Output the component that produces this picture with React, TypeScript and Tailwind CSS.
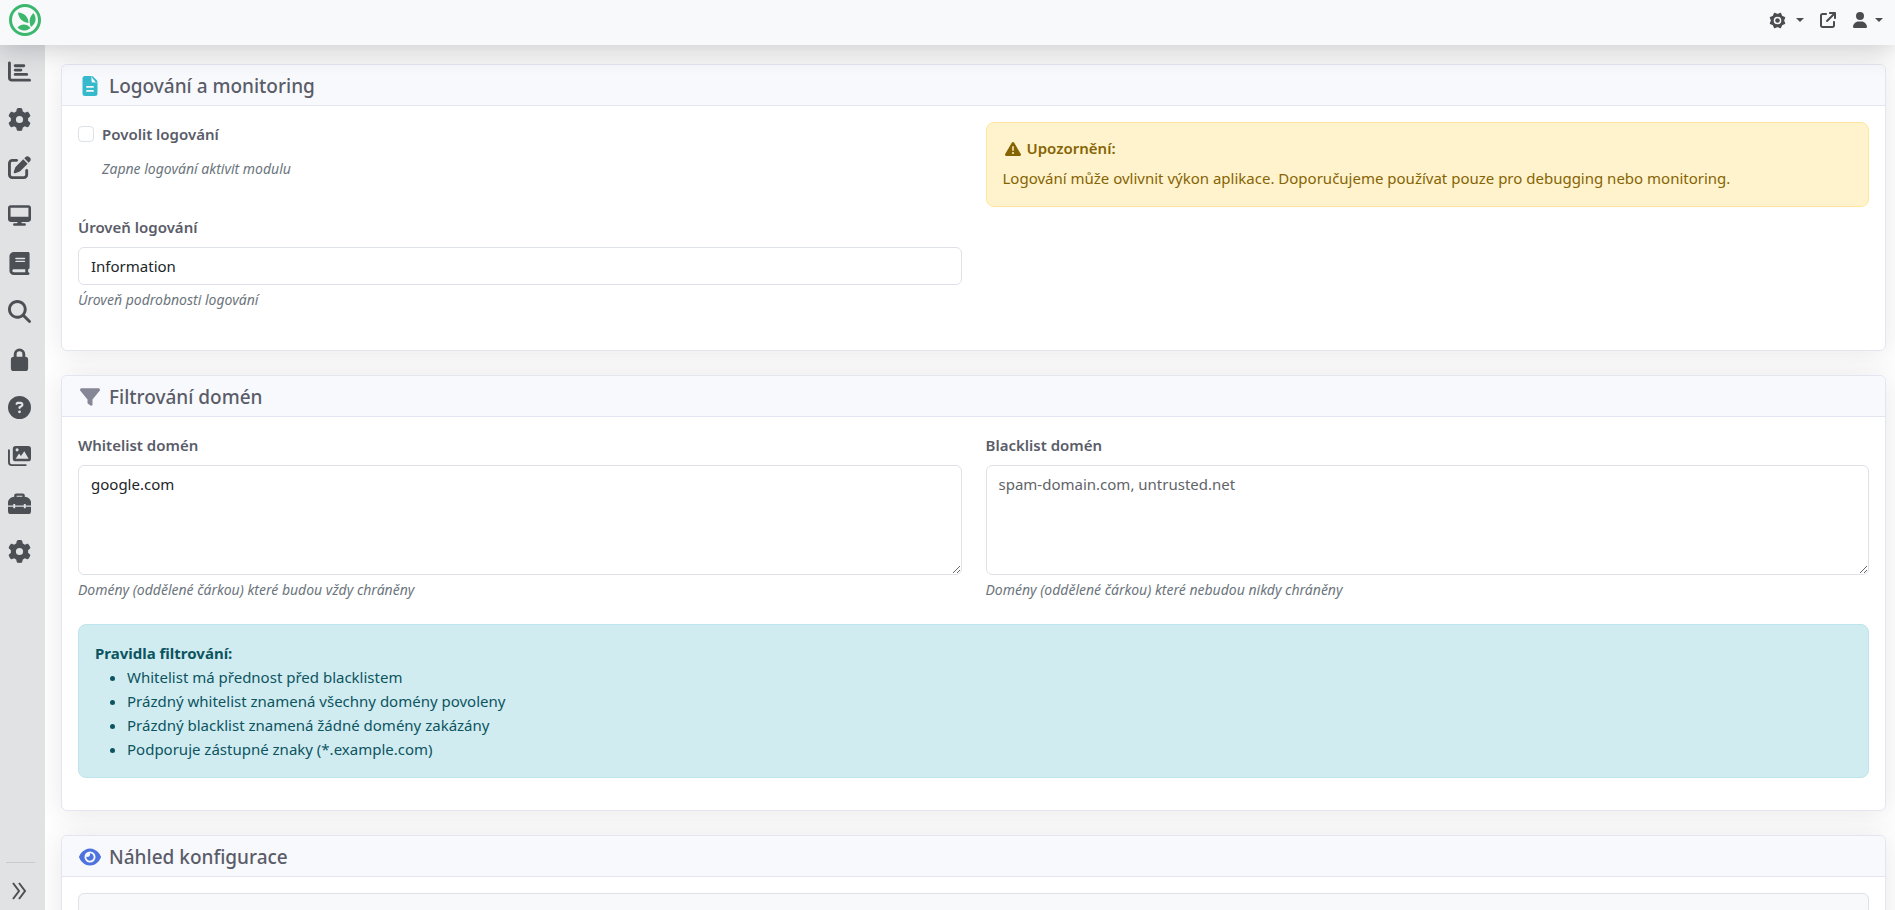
import React, { useState } from 'react';
import {
  FaArrowUpRightFromSquare,
  FaBook,
  FaChartBar,
  FaCircleQuestion,
  FaDesktop,
  FaEye,
  FaFilter,
  FaGear,
  FaMagnifyingGlass,
  FaPenToSquare,
  FaTriangleExclamation,
  FaUser,
} from 'react-icons/fa6';

type IconProps = { className?: string };

function SunIcon({ className }: IconProps) {
  return (
    <svg viewBox="0 0 24 24" className={className} fill="currentColor" aria-hidden="true">
      <path
        fillRule="evenodd"
        stroke="currentColor"
        strokeWidth="1.500"
        strokeLinejoin="round"
        d="M16.200 1.800 18 6l4.200 1.800L20.500 12l1.700 4.200L18 18l-1.800 4.200L12 20.500l-4.200 1.700L6 18l-4.200-1.800L3.500 12 1.800 7.800 6 6l1.800-4.200L12 3.500ZM12 5.800a6.200 6.200 0 1 0 0 12.400 6.200 6.200 0 0 0 0-12.400Z"
      />
      <circle cx="12" cy="12" r="3.200" />
    </svg>
  );
}

function LockIcon({ className }: IconProps) {
  return (
    <svg viewBox="0 0 24 24" className={className} fill="currentColor" aria-hidden="true">
      <path d="M6 9V6.500a6 6 0 0 1 12 0V9a3 3 0 0 1 3 3v9a3 3 0 0 1-3 3H6a3 3 0 0 1-3-3v-9a3 3 0 0 1 3-3Zm3 0h6V6.500a3 3 0 0 0-6 0Z" />
    </svg>
  );
}

function ImagesIcon({ className }: IconProps) {
  return (
    <svg viewBox="0 0 24 24" className={className} fill="currentColor" aria-hidden="true">
      <path
        fillRule="evenodd"
        d="M8 2h13a3 3 0 0 1 3 3v10a3 3 0 0 1-3 3H8a3 3 0 0 1-3-3V5a3 3 0 0 1 3-3Zm1.500 2.500a1.600 1.600 0 1 0 0 3.200 1.600 1.600 0 0 0 0-3.200ZM8 15.500h13.500L17 7.500l-3.500 5-2-2.500Z"
      />
      <path d="M1 6.500V19a3 3 0 0 0 3 3h14.500" fill="none" stroke="currentColor" strokeWidth="2" strokeLinecap="round" />
    </svg>
  );
}

function ToolboxIcon({ className }: IconProps) {
  return (
    <svg viewBox="0 0 24 24" className={className} fill="currentColor" aria-hidden="true">
      <path d="M6.500 5V3.500a2 2 0 0 1 2-2h7a2 2 0 0 1 2 2V5A6.500 6.500 0 0 1 24 11.500V14h-5.500v-1.500h-2V14h-9v-1.500h-2V14H0v-2.500A6.500 6.500 0 0 1 6.500 5ZM9 5h6V3.800H9Z" />
      <path d="M0 15.500h5.500V17h2v-1.500h9V17h2v-1.500H24V20a3 3 0 0 1-3 3H3a3 3 0 0 1-3-3Z" />
    </svg>
  );
}

function FileIcon({ className }: IconProps) {
  return (
    <svg viewBox="0 0 20 20" className={className} fill="currentColor" aria-hidden="true">
      <path
        fillRule="evenodd"
        d="M5 0h6.500v5A1.500 1.500 0 0 0 13 6.500h4.500V17.500A2.500 2.500 0 0 1 15 20H5a2.500 2.500 0 0 1-2.500-2.500v-15A2.500 2.500 0 0 1 5 0ZM7 10a.9.9 0 0 0 0 1.800h6A.9.9 0 0 0 13 10ZM7 14a.9.9 0 0 0 0 1.800h6A.9.9 0 0 0 13 14Z"
      />
      <path d="M12.200.3c.5.200.8.400 1.200.8l3.200 3.300c.3.300.5.600.7 1.100h-4.300a.8.8 0 0 1-.8-.8Z" fill="#fff" />
      <path d="M11.500 0c.8 0 1.300.2 1.800.7l3.500 3.600c.5.500.7 1.100.7 1.800v.4h-1.600l-3.600-4.400Z" />
    </svg>
  );
}

const navItems: { label: string; icon: React.ComponentType<IconProps> }[] = [
  { label: 'Přehled', icon: FaChartBar },
  { label: 'Nastavení', icon: FaGear },
  { label: 'Obsah', icon: FaPenToSquare },
  { label: 'Vzhled', icon: FaDesktop },
  { label: 'Katalog', icon: FaBook },
  { label: 'Hledat', icon: FaMagnifyingGlass },
  { label: 'Zabezpečení', icon: LockIcon },
  { label: 'Nápověda', icon: FaCircleQuestion },
  { label: 'Média', icon: ImagesIcon },
  { label: 'Nástroje', icon: ToolboxIcon },
  { label: 'Systém', icon: FaGear },
];

const rules = [
  'Whitelist má přednost před blacklistem',
  'Prázdný whitelist znamená všechny domény povoleny',
  'Prázdný blacklist znamená žádné domény zakázány',
  'Podporuje zástupné znaky (*.example.com)',
];

const labelClass = 'block leading-6 font-semibold text-[#5a5c69]';
const hintClass = 'text-[14px] leading-[21px] italic text-[#6c757d]';
const fieldClass = 'block w-full rounded-md border border-[#dee2e6] bg-white px-3 py-[6px] leading-6 text-[#212529] placeholder:text-[#5f6469]';

function Logo() {
  return (
    <svg viewBox="0 0 32 32" className="size-8" fill="#3cb76e">
      <circle cx="16" cy="16" r="14.5" fill="none" stroke="#3cb76e" strokeWidth="3" />
      <path d="M9 8.500C15 9 19.500 12.500 19.500 19C13 18 9.500 14 9 8.500Z" />
      <path d="M24.500 9C28 14 27 19.500 22 23C19.500 17.500 20.500 12.500 24.500 9Z" />
      <path d="M8.500 23.500C12 19.500 18 19.500 21.500 24C17.500 27.500 12 27.500 8.500 23.500Z" />
    </svg>
  );
}

function Caret() {
  return <span className="border-x-4 border-t-4 border-x-transparent border-t-[#4a4d50]" />;
}

// White panel with a tinted title bar
function Card({ icon, title, children }: { icon: React.ReactNode; title: string; children: React.ReactNode }) {
  return (
    <section className="rounded-md border border-[#e3e6f0] bg-white shadow-[0_2px_28px_0_rgba(58,59,69,0.12)]">
      <header className="flex h-[41px] items-center rounded-t-md border-b border-[#e3e6f0] bg-[#f8f9fc] px-4 pt-[2px]">
        <span className="mr-[7px] flex w-6 justify-center">{icon}</span>
        <h2 className="text-[19px] leading-6 font-medium text-[#5a5c69]">{title}</h2>
      </header>
      <div className="p-4">{children}</div>
    </section>
  );
}

export default function App() {
  const [enabled, setEnabled] = useState(false);
  const [level, setLevel] = useState('Information');
  const [whitelist, setWhitelist] = useState('google.com');
  const [blacklist, setBlacklist] = useState('');

  return (
    <div className="flex h-screen flex-col overflow-hidden bg-white font-['Noto_Sans','Open_Sans',sans-serif] text-[15px] leading-6 text-[#212529]">
      {/* ───── TOP BAR ───── */}
      <header className="relative z-10 flex h-[45px] shrink-0 items-center justify-between bg-[#f8f9fa] pr-3 pb-[5px] pl-[9px] shadow-[0_2px_28px_0_rgba(58,59,69,0.3)]">
        <a href="#" aria-label="Domů">
          <Logo />
        </a>
        <div className="flex items-center gap-4 text-[#4a4d50]">
          <button aria-label="Vzhled webu" className="flex items-center gap-[10px]">
            <SunIcon className="size-[17px]" />
            <Caret />
          </button>
          <a href="#" aria-label="Otevřít web">
            <FaArrowUpRightFromSquare className="size-4" />
          </a>
          <button aria-label="Uživatel" className="flex items-center gap-[7px]">
            <FaUser className="size-4" />
            <Caret />
          </button>
        </div>
      </header>

      <div className="flex min-h-0 flex-1">
        {/* ───── SIDEBAR ───── */}
        <aside className="flex w-[45px] shrink-0 flex-col justify-between bg-[#e1e2e4] text-[#4c5054]">
          <nav className="flex flex-col pt-[2px] pl-2">
            {navItems.map(({ label, icon: Icon }) => (
              <a key={label} href="#" aria-label={label} className="flex h-12 items-center">
                <Icon className="size-[23px]" />
              </a>
            ))}
          </nav>
          <button aria-label="Rozbalit menu" className="mr-[10px] ml-[6px] flex h-12 items-center border-t border-[#c8cacc] pt-2 pl-[5px]">
            <svg viewBox="0 0 16 18" className="h-[18px] w-4" fill="none" stroke="currentColor" strokeWidth="2">
              <path d="M2 1L8 9L2 17M8 1L14 9L8 17" />
            </svg>
          </button>
        </aside>

        {/* ───── CONTENT ───── */}
        <main className="flex min-w-0 flex-1 flex-col gap-6 overflow-hidden pt-[19px] pr-[9px] pl-4">
          <Card icon={<FileIcon className="size-5 text-[#36b9cc]" />} title="Logování a monitoring">
            <div className="grid grid-cols-2 items-start gap-6 pb-6">
              <div>
                <div className="flex items-center gap-2">
                  <input
                    id="enabled"
                    type="checkbox"
                    checked={enabled}
                    onChange={(e) => setEnabled(e.target.checked)}
                    className="size-4 appearance-none rounded border border-[#dee2e6] checked:bg-[#4e73df]"
                  />
                  <label htmlFor="enabled" className={labelClass}>Povolit logování</label>
                </div>
                <p className={`mt-3 ml-6 ${hintClass}`}>Zapne logování aktivit modulu</p>

                <label htmlFor="level" className={`mt-9 mb-2 ${labelClass}`}>Úroveň logování</label>
                <select
                  id="level"
                  value={level}
                  onChange={(e) => setLevel(e.target.value)}
                  className={`appearance-none ${fieldClass}`}
                >
                  <option>Information</option>
                  <option>Warning</option>
                  <option>Error</option>
                </select>
                <p className={`mt-1 ${hintClass}`}>Úroveň podrobnosti logování</p>
              </div>

              <div className="rounded-lg border border-[#ffe69c] bg-[#fff3cd] p-4 text-[#856404]">
                <h3 className="mb-2 flex items-center leading-[19px] font-semibold">
                  <FaTriangleExclamation className="mr-[6px] ml-[2px] size-4" />
                  Upozornění:
                </h3>
                <p>Logování může ovlivnit výkon aplikace. Doporučujeme používat pouze pro debugging nebo monitoring.</p>
              </div>
            </div>
          </Card>

          <Card icon={<FaFilter className="size-5 text-[#858796]" />} title="Filtrování domén">
            <div className="grid grid-cols-2 gap-6">
              <div>
                <label htmlFor="whitelist" className={`mb-2 ${labelClass}`}>Whitelist domén</label>
                <textarea
                  id="whitelist"
                  value={whitelist}
                  onChange={(e) => setWhitelist(e.target.value)}
                  className={`h-[110px] ${fieldClass}`}
                />
                <p className={`mt-1 ${hintClass}`}>Domény (oddělené čárkou) které budou vždy chráněny</p>
              </div>
              <div>
                <label htmlFor="blacklist" className={`mb-2 ${labelClass}`}>Blacklist domén</label>
                <textarea
                  id="blacklist"
                  value={blacklist}
                  placeholder="spam-domain.com, untrusted.net"
                  onChange={(e) => setBlacklist(e.target.value)}
                  className={`h-[110px] ${fieldClass}`}
                />
                <p className={`mt-1 ${hintClass}`}>Domény (oddělené čárkou) které nebudou nikdy chráněny</p>
              </div>
            </div>

            <div className="mt-6 mb-4 rounded-lg border border-[#bee5eb] bg-[#d1ecf1] p-4 text-[#0c5460]">
              <strong className="font-bold">Pravidla filtrování:</strong>
              <ul className="list-disc pl-8">
                {rules.map((rule) => (
                  <li key={rule}>{rule}</li>
                ))}
              </ul>
            </div>
          </Card>

          <Card icon={<FaEye className="size-[22px] text-[#4e73df]" />} title="Náhled konfigurace">
            <div className="h-40 rounded-md border border-[#dee2e6] bg-[#f8f9fa]" />
          </Card>
        </main>
      </div>
    </div>
  );
}
